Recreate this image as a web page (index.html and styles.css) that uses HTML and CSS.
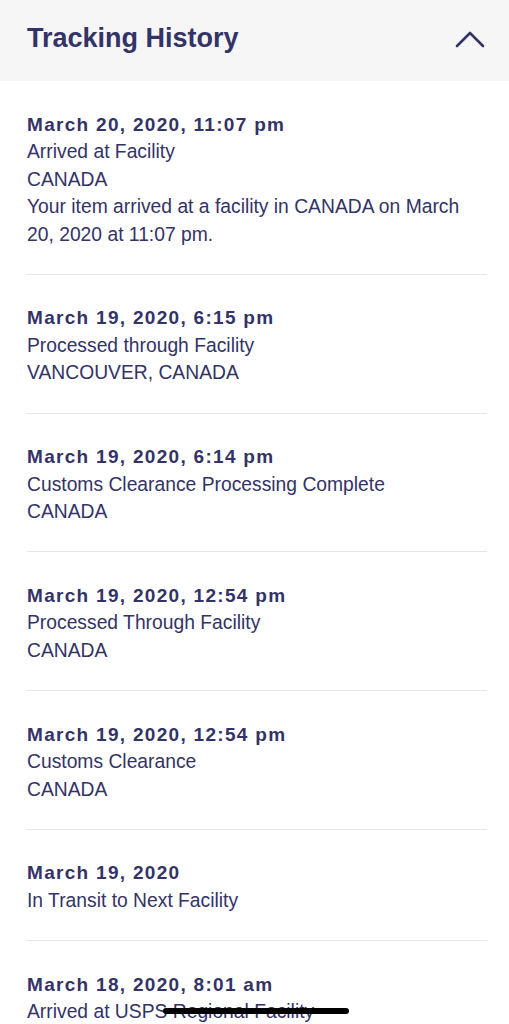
FILE: index.html
```html
<html>
  <head>
    <title>Tracking History</title>
    <meta name="viewport" content="width=device-width, initial-scale=1">
    <link rel="stylesheet" href="styles.css">
  </head>
  <body>
    <header class="panel-head">
      <h2>Tracking History</h2>
      <svg class="chevron" width="30" height="18" viewBox="0 0 30 18">
        <polyline points="2,16 15,3 28,16" fill="none" stroke="#333366" stroke-width="2.6" stroke-linecap="round" stroke-linejoin="round"/>
      </svg>
    </header>

    <ul class="events">
      <li class="event">
        <p class="when">March 20, 2020, 11:07 pm</p>
        <p>Arrived at Facility</p>
        <p>CANADA</p>
        <p>Your item arrived at a facility in CANADA on March 20, 2020 at 11:07 pm.</p>
      </li>
      <li class="event">
        <p class="when">March 19, 2020, 6:15 pm</p>
        <p>Processed through Facility</p>
        <p>VANCOUVER, CANADA</p>
      </li>
      <li class="event">
        <p class="when">March 19, 2020, 6:14 pm</p>
        <p>Customs Clearance Processing Complete</p>
        <p>CANADA</p>
      </li>
      <li class="event">
        <p class="when">March 19, 2020, 12:54 pm</p>
        <p>Processed Through Facility</p>
        <p>CANADA</p>
      </li>
      <li class="event">
        <p class="when">March 19, 2020, 12:54 pm</p>
        <p>Customs Clearance</p>
        <p>CANADA</p>
      </li>
      <li class="event">
        <p class="when">March 19, 2020</p>
        <p>In Transit to Next Facility</p>
      </li>
      <li class="event">
        <p class="when">March 18, 2020, 8:01 am</p>
        <p>Arrived at USPS Regional Facility</p>
      </li>
    </ul>

    <div class="home-bar"></div>
  </body>
</html>
```

FILE: styles.css
```css
body {
  background: #ffffff;
  color: #333366;
  font-family: "Liberation Sans", Arial, sans-serif;
  height: 1024px;
  margin: 0;
  overflow: hidden;
}

.panel-head {
  align-items: center;
  background: #f6f6f6;
  box-sizing: border-box;
  display: flex;
  height: 81px;
  justify-content: space-between;
  padding: 0 24px 4px 27px;
}

.panel-head h2 {
  font-size: 27px;
  font-weight: 700;
  margin: 0;
}

.chevron {
  display: block;
}

.events {
  list-style: none;
  margin: 0;
  padding: 0 22px 0 27px;
}

.event {
  border-bottom: 1px solid #e6e6e9;
  padding: 29.5px 0 25.75px;
}

.event p {
  font-size: 19.3px;
  line-height: 27.5px;
  margin: 0;
}

.event .when {
  font-size: 19px;
  font-weight: 700;
  letter-spacing: 1.3px;
}

.home-bar {
  background: #000000;
  border-radius: 3px;
  bottom: 10px;
  height: 6px;
  left: 163px;
  position: fixed;
  width: 186px;
}
```
